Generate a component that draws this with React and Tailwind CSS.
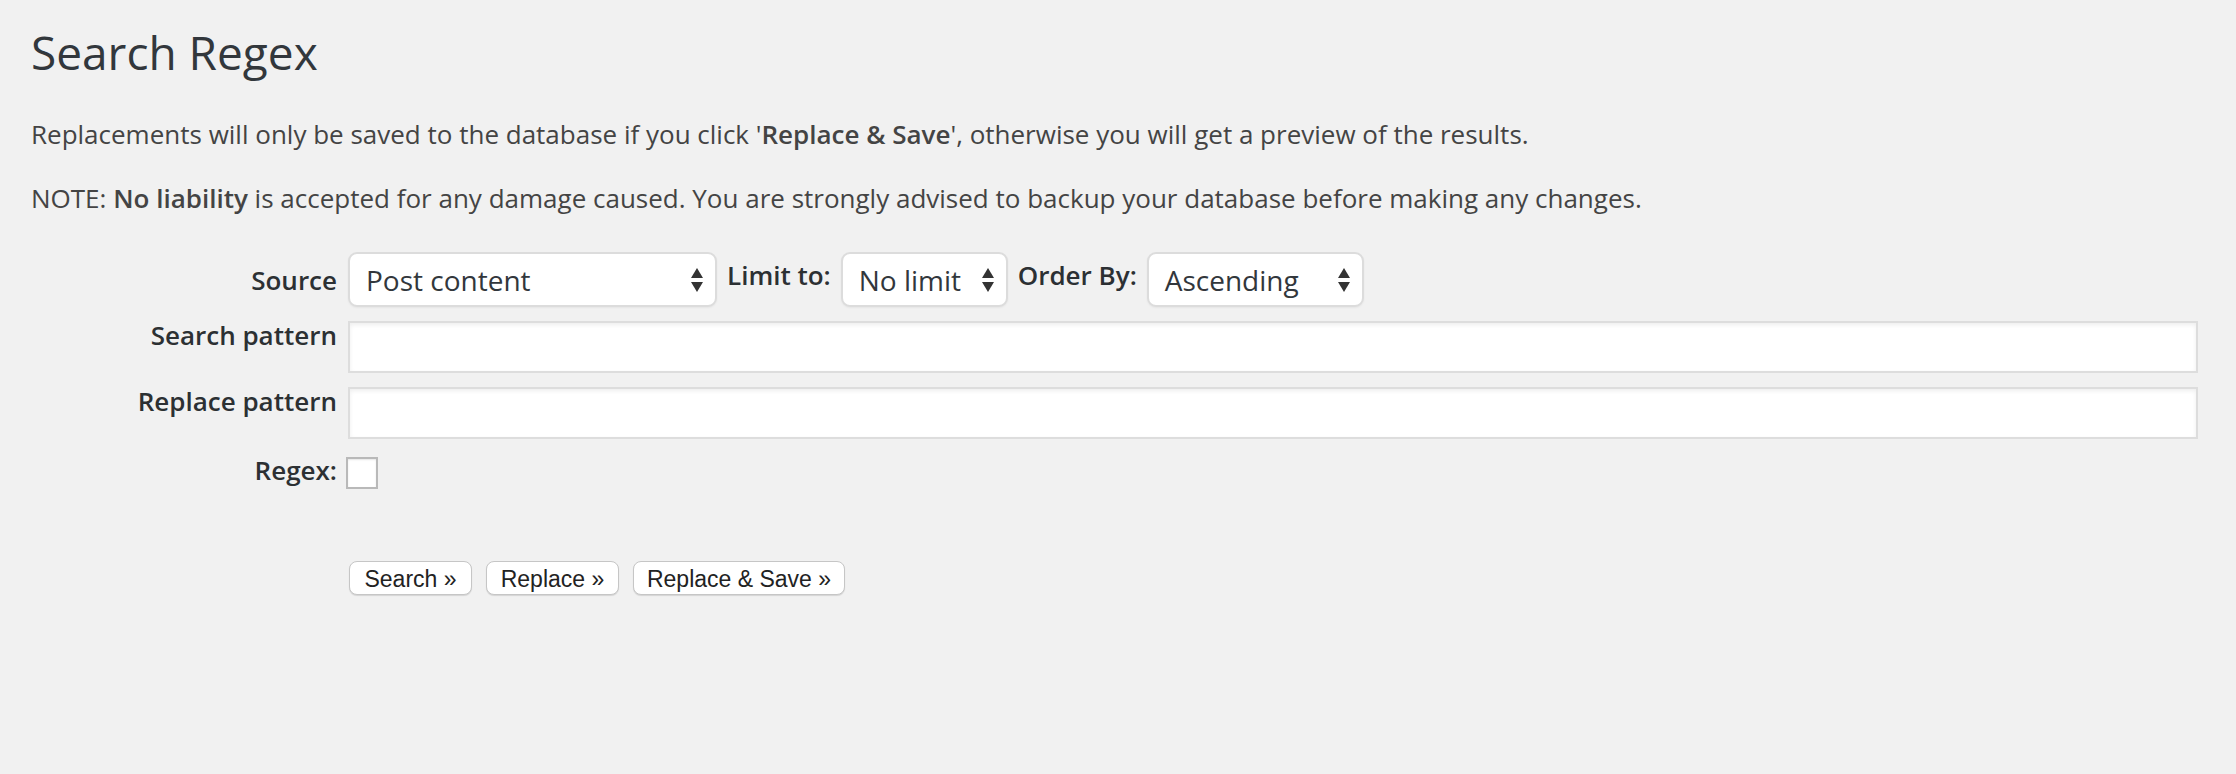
function Arrows() {
  return (
    <svg width="12" height="24" viewBox="0 0 12 24" className="shrink-0">
      <path d="M6 0 L12 10 L0 10 Z" fill="#333" />
      <path d="M0 14 L12 14 L6 24 Z" fill="#333" />
    </svg>
  );
}

function Select({ value, width }) {
  return (
    <div
      className={`${width} h-[55px] shrink-0 flex items-center justify-between pl-[16px] pr-[12px] bg-white border-2 border-[#dcdcdc] rounded-[9px] text-[28px] text-[#32373c] shadow-[0_1px_2px_rgba(0,0,0,0.05)]`}
    >
      <span>{value}</span>
      <Arrows />
    </div>
  );
}

function Label({ children, className = "" }) {
  return (
    <div className={`w-[306px] shrink-0 text-right text-[26px] leading-[38px] font-semibold text-[#2c3033] ${className}`}>
      {children}
    </div>
  );
}

export default function App() {
  return (
    <div className="bg-[#f1f1f1] min-h-screen font-['Open_Sans',sans-serif] text-[#444] pl-[31px] pr-[38px] pt-[23px]">
      <h1 className="text-[46px] leading-[58px] font-normal text-[#32373c]">Search Regex</h1>

      <p className="mt-[34px] text-[26px] leading-[39px]">
        Replacements will only be saved to the database if you click '<strong className="font-semibold">Replace &amp; Save</strong>', otherwise you will get a preview of the results.
      </p>
      <p className="mt-[25px] text-[26px] leading-[39px]">
        NOTE: <strong className="font-semibold">No liability</strong> is accepted for any damage caused. You are strongly advised to backup your database before making any changes.
      </p>

      <div className="mt-[34px] flex flex-col">
        {/* Source / limit / order */}
        <div className="flex items-center gap-[11px]">
          <Label>Source</Label>
          <Select value="Post content" width="w-[369px]" />
          <span className="-mx-[1px] mb-[10px] text-[26px] leading-[38px] font-semibold text-[#2c3033]">Limit to:</span>
          <Select value="No limit" width="w-[167px]" />
          <span className="-mx-[1px] mb-[10px] text-[26px] leading-[38px] font-semibold text-[#2c3033]">Order By:</span>
          <Select value="Ascending" width="w-[217px]" />
        </div>

        <div className="mt-[9px] flex items-start gap-[11px]">
          <Label>Search pattern</Label>
          <input
            type="text"
            className="mt-[5px] flex-1 h-[52px] bg-white border-2 border-[#dddddd] shadow-[inset_0_2px_4px_rgba(0,0,0,0.07)] outline-none"
          />
        </div>

        <div className="mt-[9px] flex items-start gap-[11px]">
          <Label>Replace pattern</Label>
          <input
            type="text"
            className="mt-[5px] flex-1 h-[52px] bg-white border-2 border-[#dddddd] shadow-[inset_0_2px_4px_rgba(0,0,0,0.07)] outline-none"
          />
        </div>

        <div className="mt-[12px] flex items-start gap-[11px]">
          <Label>Regex:</Label>
          <div className="mt-[6px] -ml-[2px] w-[32px] h-[32px] bg-white border-2 border-[#b9b9b9] shadow-[inset_0_1px_2px_rgba(0,0,0,0.1)]" />
        </div>

        <div className="mt-[72px] pl-[318px] flex gap-[14px] font-['Liberation_Sans',Arial,sans-serif] text-[23px] text-[#222]">
          <button className="w-[123px] h-[34px] bg-white border border-[#c6c6c6] rounded-[8px] shadow-[0_1px_1px_rgba(0,0,0,0.12)]">Search »</button>
          <button className="w-[133px] h-[34px] bg-white border border-[#c6c6c6] rounded-[8px] shadow-[0_1px_1px_rgba(0,0,0,0.12)]">Replace »</button>
          <button className="w-[212px] h-[34px] bg-white border border-[#c6c6c6] rounded-[8px] shadow-[0_1px_1px_rgba(0,0,0,0.12)]">Replace &amp; Save »</button>
        </div>
      </div>
    </div>
  );
}
